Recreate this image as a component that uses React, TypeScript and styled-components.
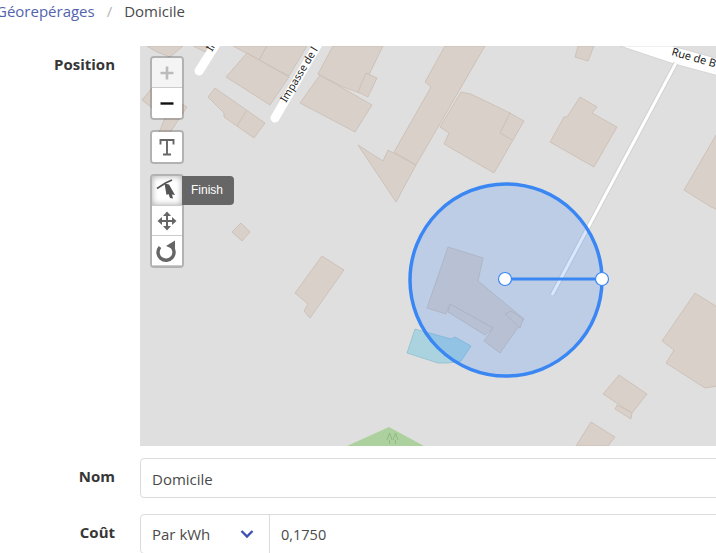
import styled, { createGlobalStyle } from "styled-components";

const GlobalStyle = createGlobalStyle`
    html, body {
        margin: 0;
        height: 553px;
        overflow: hidden;
        background: #fff;
    }
    * { box-sizing: border-box; }
`;

const Page = styled.div`
    width: 760px;
    font-family: "Open Sans", "Noto Sans", sans-serif;
    color: #363636;
`;

const Breadcrumb = styled.nav`
    display: flex;
    align-items: center;
    height: 21px;
    margin-left: -4px;
    font-size: 15px;
`;

const CrumbLink = styled.span`
    color: #5264ae;
`;

const CrumbSep = styled.span`
    color: #b5b5b5;
    margin: 0 12px;
`;

const CrumbCurrent = styled.span`
    color: #4a4a4a;
`;

const Form = styled.div`
    display: flex;
    flex-direction: column;
    padding-top: 25px;
`;

const Row = styled.div<{ $gap: number }>`
    display: flex;
    gap: 25px;
    margin-bottom: ${(p) => p.$gap}px;
`;

const Label = styled.label`
    width: 115px;
    padding-top: 8px;
    text-align: right;
    font-size: 15px;
    line-height: 20px;
    font-weight: 700;
    color: #363636;
`;

const MapBox = styled.div`
    position: relative;
    width: 620px;
    height: 400px;
    overflow: hidden;
    background: #e0dfdf;
`;

const MapSvg = styled.svg`
    display: block;
`;

const Controls = styled.div`
    position: absolute;
    top: 10px;
    left: 10px;
    display: flex;
    flex-direction: column;
    gap: 10px;
`;

const Bar = styled.div`
    position: relative;
    width: 34px;
    border: 2px solid rgba(0, 0, 0, 0.2);
    border-radius: 4px;
    background-clip: padding-box;
`;

const ToolButton = styled.div<{ $off?: boolean; $pressed?: boolean }>`
    display: flex;
    align-items: center;
    justify-content: center;
    width: 30px;
    height: 30px;
    background: ${(p) => (p.$off ? "#f4f4f4" : "#fff")};
    border-bottom: 1px solid #ccc;
    box-shadow: ${(p) => (p.$pressed ? "inset 0 0 6px rgba(0, 0, 0, 0.35)" : "none")};
    &:first-child {
        border-top-left-radius: 2px;
        border-top-right-radius: 2px;
    }
    &:last-child {
        border-bottom: none;
        border-bottom-left-radius: 2px;
        border-bottom-right-radius: 2px;
    }
`;

const Tooltip = styled.div`
    position: absolute;
    top: 0;
    left: 30px;
    height: 29px;
    padding: 0 11px 0 9px;
    background: #666;
    border-radius: 0 4px 4px 0;
    color: #fff;
    font-family: "Liberation Sans", Arial, sans-serif;
    font-size: 12px;
    line-height: 28px;
`;

const Field = styled.div`
    display: flex;
    align-items: center;
    width: 620px;
    height: 40px;
    padding: 1px 0 0 11px;
    border: 1px solid #dbdbdb;
    border-radius: 4px;
    font-size: 15px;
    color: #4a4a4a;
`;

const Addons = styled.div`
    display: flex;
    width: 620px;
    height: 40px;
    border: 1px solid #dbdbdb;
    border-radius: 4px;
    font-size: 15px;
    color: #4a4a4a;
`;

const SelectPart = styled.div`
    display: flex;
    align-items: center;
    justify-content: space-between;
    width: 129px;
    padding: 0 15px 0 11px;
    border-right: 1px solid #dbdbdb;
`;

const ValuePart = styled.div`
    display: flex;
    align-items: center;
    padding: 1px 0 0 11px;
    font-size: 14.5px;
`;

const building = "#d9d0c9";
const buildingEdge = "#c9bdb2";

const buildings = [
    "147,46 183,46 170,57 157,52",
    "193,46 213,46 205,52",
    "233,46 267,46 259,60",
    "267,46 307,46 289,76 259,60",
    "247,53 289,77 270,105 226,77",
    "142,100 152,88 187,107 167,137 157,137 165,118",
    "208,97 215,88 265,123 254,138 224,117 224,113",
    "300,103 320,75 372,105 355,132",
    "318,74 333,46 383,46 360,93 343,87",
    "366,73 377,78 368,97 358,92",
    "445,46 485,46 416,165 394,152 431,87 425,82",
    "358,145 383,161 388,150 416,165 396,202",
    "461,92 471,94 510,113 524,121 494,173 444,144 449,133 440,127",
    "580,97 597,107 592,113 617,127 594,167 550,142 564,117 567,117",
    "578,46 594,46 588,61 575,57",
    "716,135 684,190 711,207 730,215 730,120",
    "232,232 241,223 250,232 242,241",
    "322,256 344,270 310,318 304,311 308,304 295,293",
    "448,247 483,258 478,281 524,319 500,353 484,341 493,328 450,304 446,314 427,308",
    "450,304 493,328 485,335 448,312",
    "505,314 511,311 523,319 520,328",
    "695,293 730,315 730,384 705,388 666,363 674,350 662,341",
    "619,375 647,394 632,413 603,394",
    "617,405 632,413 631,419 615,409",
    "591,422 615,437 608,446 576,446",
];

function MapDrawing() {
    return (
        <MapSvg width={620} height={400} viewBox="140 46 620 400">
            <polygon points="347,446 389,427 424,446" fill="#add19e" />
            <path d="M387 440 l2.5 -7 l2.5 7 M393 440 l2.5 -7 l2.5 7 M389.5 440 v4 M395.5 440 v4" fill="none" stroke="#8fae82" strokeWidth={0.8} />
            {buildings.map((pts) => (
                <polygon key={pts} points={pts} fill={building} stroke={buildingEdge} strokeWidth={0.8} />
            ))}
            <path d="M510 113 L500 133 L512 140" fill="none" stroke={buildingEdge} strokeWidth={0.8} />
            <path d="M247 110 L237 126" fill="none" stroke={buildingEdge} strokeWidth={0.8} />
            <polygon points="415,329 451,339 455,337 471,346 461,361 448,363 438,363 407,353" fill="#aad3df" stroke="#8fbfce" strokeWidth={0.8} />

            <path d="M199 71 L216 44" stroke="#fff" strokeWidth={9} strokeLinecap="round" fill="none" />
            <path d="M275 118 L318 44" stroke="#fff" strokeWidth={9} strokeLinecap="round" fill="none" />
            <text transform="translate(286 103) rotate(-59)" fontFamily="Noto Sans, sans-serif" fontSize={10.5} fill="#222">Impasse de l</text>
            <text transform="translate(212 52) rotate(-59)" fontFamily="Noto Sans, sans-serif" fontSize={10.5} fill="#222">In</text>

            <polygon points="620,46 672,46 730,62 730,79 671,63" fill="#fff" stroke="#c8c6c6" strokeWidth={0.6} />
            <text transform="translate(671 55) rotate(16)" fontFamily="Noto Sans, sans-serif" fontSize={11} fill="#222">Rue de B</text>
            <path d="M676 63 L552 295" stroke="#d2d0d0" strokeWidth={5} fill="none" />
            <path d="M676 63 L552 295" stroke="#fff" strokeWidth={3} fill="none" />

            <circle cx={506} cy={280} r={96} fill="#3388ff" fillOpacity={0.2} stroke="#3a87f4" strokeWidth={3.5} />
            <path d="M505 279 H602" stroke="#3a87f4" strokeWidth={3} />
            <circle cx={505} cy={279} r={6.5} fill="#fff" stroke="#3a87f4" strokeWidth={1.2} />
            <circle cx={602} cy={279} r={6.5} fill="#fff" stroke="#3a87f4" strokeWidth={1.2} />
        </MapSvg>
    );
}

function PlusIcon() {
    return (
        <svg width={30} height={30} viewBox="0 0 30 30">
            <path d="M15 8.5 V21.5 M8.5 15 H21.5" stroke="#bbb" strokeWidth={2.6} />
        </svg>
    );
}

function MinusIcon() {
    return (
        <svg width={30} height={30} viewBox="0 0 30 30">
            <path d="M8.5 15.5 H21.5" stroke="#111" strokeWidth={2.4} />
        </svg>
    );
}

function TextIcon() {
    return (
        <svg width={30} height={30} viewBox="0 0 30 30">
            <path d="M8.5 12.5 V8 H21.5 V12.5 M15 8 V22.5 M11 22.5 H19" fill="none" stroke="#666" strokeWidth={1.9} />
        </svg>
    );
}

function FinishIcon() {
    return (
        <svg width={30} height={30} viewBox="0 0 30 30">
            <path d="M5 12.5 L13.5 7 L20 4" fill="none" stroke="#555" strokeWidth={1.8} />
            <path d="M12.5 7.5 L17 8.5 L23 19 L20 18.5 L21 22.5 L18 22 L16.5 18 L14.5 19 Z" fill="#555" />
        </svg>
    );
}

function MoveIcon() {
    return (
        <svg width={30} height={30} viewBox="0 0 30 30" fill="#666">
            <path d="M15 7 V23 M7 15 H23" stroke="#666" strokeWidth={2} />
            <path d="M15 5.5 L19 10 H11 Z M15 24.5 L11 20 H19 Z M5.5 15 L10 11 V19 Z M24.5 15 L20 19 V11 Z" />
        </svg>
    );
}

function UndoIcon() {
    return (
        <svg width={30} height={30} viewBox="0 0 30 30">
            <path d="M8 11 A8 8 0 1 0 19 10" fill="none" stroke="#666" strokeWidth={3.4} />
            <path d="M23 4.5 V14 L14 10 Z" fill="#666" />
        </svg>
    );
}

function Chevron() {
    return (
        <svg width={14} height={10} viewBox="0 0 14 10">
            <path d="M1.5 2 L7 7.5 L12.5 2" fill="none" stroke="#3d51b5" strokeWidth={2.4} />
        </svg>
    );
}

export default function App() {
    return (
        <Page>
            <GlobalStyle />
            <Breadcrumb>
                <CrumbLink>Géorepérages</CrumbLink>
                <CrumbSep>/</CrumbSep>
                <CrumbCurrent>Domicile</CrumbCurrent>
            </Breadcrumb>
            <Form>
                <Row $gap={12}>
                    <Label>Position</Label>
                    <MapBox>
                        <MapDrawing />
                        <Controls>
                            <Bar>
                                <ToolButton $off><PlusIcon /></ToolButton>
                                <ToolButton><MinusIcon /></ToolButton>
                            </Bar>
                            <Bar>
                                <ToolButton><TextIcon /></ToolButton>
                            </Bar>
                            <Bar>
                                <ToolButton $pressed><FinishIcon /></ToolButton>
                                <ToolButton><MoveIcon /></ToolButton>
                                <ToolButton><UndoIcon /></ToolButton>
                                <Tooltip>Finish</Tooltip>
                            </Bar>
                        </Controls>
                    </MapBox>
                </Row>
                <Row $gap={16}>
                    <Label>Nom</Label>
                    <Field>Domicile</Field>
                </Row>
                <Row $gap={0}>
                    <Label>Coût</Label>
                    <Addons>
                        <SelectPart>
                            Par kWh
                            <Chevron />
                        </SelectPart>
                        <ValuePart>0,1750</ValuePart>
                    </Addons>
                </Row>
            </Form>
        </Page>
    );
}
